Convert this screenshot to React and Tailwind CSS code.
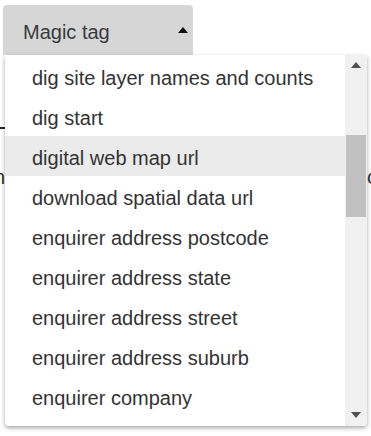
import React from 'react';

const items = [
  'dig site layer names and counts',
  'dig start',
  'digital web map url',
  'download spatial data url',
  'enquirer address postcode',
  'enquirer address state',
  'enquirer address street',
  'enquirer address suburb',
  'enquirer company',
];

export default function App() {
  return (
    <div className="relative w-[371px] h-[436px] bg-white overflow-hidden font-['Liberation_Sans',Arial,sans-serif] text-[#333]">
      {/* Button */}
      <div className="ml-[3px] mt-[5px] w-[190px] h-[50px] bg-[#d6d6d6] rounded-t-[4px] flex items-center justify-between pl-[20px] pr-[3px]">
        <span className="text-[20px] text-[#363a40] pt-[4px]">Magic tag</span>
        <svg width="10" height="6" viewBox="0 0 10 6" className="mr-[2px]">
          <path d="M0 6 L5 0 L10 6 Z" fill="#111" />
        </svg>
      </div>

      {/* Content behind the menu */}
      <div className="mt-[72px] h-[2px] w-[6px] bg-[#222]" />
      <div className="mt-[38px] flex justify-between text-[20px] leading-[20px]">
        <span className="-ml-[6px]">n</span>
        <span className="-mr-[6px]">c</span>
      </div>

      {/* Dropdown menu */}
      <div className="absolute left-[5px] top-[55px] w-[362px] h-[371px] bg-white rounded-b-[4px] shadow-[0_2px_4px_rgba(0,0,0,0.35)] flex overflow-hidden">
        <ul className="flex-1 pt-[1px]">
          {items.map((item) => (
            <li
              key={item}
              className={`h-[40px] flex items-center pl-[27px] pt-[4px] text-[20px] whitespace-nowrap ${
                item === 'digital web map url' ? 'bg-[#ebebeb]' : ''
              }`}
            >
              {item}
            </li>
          ))}
        </ul>
        <div className="w-[22px] bg-[#f1f1f1] flex flex-col items-center">
          <div className="h-[20px] flex items-center justify-center">
            <svg width="10" height="6" viewBox="0 0 10 6">
              <path d="M0 6 L5 0 L10 6 Z" fill="#505050" />
            </svg>
          </div>
          <div className="mt-[60px] w-[20px] h-[82px] bg-[#c1c1c1]" />
          <div className="flex-1" />
          <div className="h-[22px] flex items-center justify-center">
            <svg width="10" height="6" viewBox="0 0 10 6">
              <path d="M0 0 L5 6 L10 0 Z" fill="#505050" />
            </svg>
          </div>
        </div>
      </div>
    </div>
  );
}
